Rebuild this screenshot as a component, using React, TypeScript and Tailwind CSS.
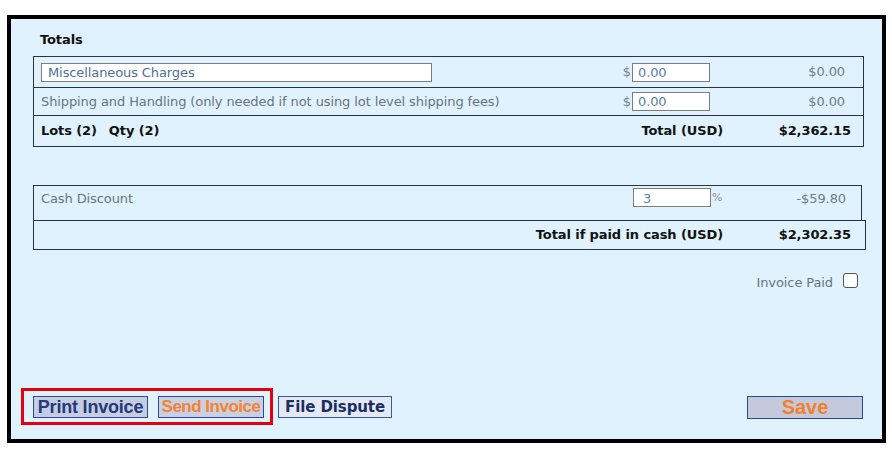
import React from "react";

const verdana = "font-['DejaVu_Sans',Verdana,sans-serif]";
const arial = "font-['Liberation_Sans',Arial,sans-serif]";

function AmountInput({ value }: { value: string }) {
  return (
    <div className="flex items-center">
      <span className="w-[9px] text-right text-[#7a8590]">$</span>
      <div className="ml-[1px] h-[19px] w-[78px] border border-[#7d7d7d] bg-white pl-[5px] leading-[17px] text-[#5b7fa8]">
        {value}
      </div>
    </div>
  );
}

export default function App() {
  return (
    <div className={`h-[449px] w-[892px] bg-white pl-[7px] pt-[15px] ${verdana} text-[13px] tracking-[-0.1px]`}>
      <div className="flex h-[428px] w-[879px] flex-col border-4 border-black bg-[#dff2fd]">
        <div className="ml-[29px] mt-[13px] text-[13px] font-bold leading-[15px] text-[#111]">Totals</div>

        {/* charges table */}
        <div className="ml-[22px] mt-[9px] w-[831px] border border-[#2a3440]">
          <div className="flex h-[31px] items-center border-b border-[#2a3440]">
            <div className="flex-1 pl-[7px]">
              <div className="h-[19px] w-[391px] border border-[#7d7d7d] bg-white pl-[6px] leading-[17px] text-[#4d6f96]">
                Miscellaneous Charges
              </div>
            </div>
            <div className="w-[104px]">
              <AmountInput value="0.00" />
            </div>
            <div className="w-[137px] pr-[18px] text-right text-[#737c85]">$0.00</div>
          </div>
          <div className="flex h-[28px] items-center border-b border-[#2a3440]">
            <div className="flex-1 pl-[7px] text-[#6b747c]">
              Shipping and Handling (only needed if not using lot level shipping fees)
            </div>
            <div className="w-[104px]">
              <AmountInput value="0.00" />
            </div>
            <div className="w-[137px] pr-[18px] text-right text-[#737c85]">$0.00</div>
          </div>
          <div className="flex h-[30px] items-center font-bold text-[#111]">
            <div className="flex-1 pl-[7px]">
              Lots (2)<span className="ml-[12px]">Qty (2)</span>
            </div>
            <div className="pr-[1px]">Total (USD)</div>
            <div className="w-[139px] pr-[12px] text-right">$2,362.15</div>
          </div>
        </div>

        {/* cash discount */}
        <div className="ml-[22px] mt-[38px] flex h-[35px] w-[829px] border border-b-0 border-[#2a3440]">
          <div className="flex-1 pl-[7px] pt-[3px] text-[#6b747c]">Cash Discount</div>
          <div className="flex w-[104px] items-start pt-[2px]">
            <div className="ml-[10px] h-[19px] w-[78px] border border-[#7d7d7d] bg-white pl-[9px] leading-[19px] text-[#5b7fa8]">
              3
            </div>
            <span className="ml-[1px] mt-[2px] text-[11px] text-[#8a9299]">%</span>
          </div>
          <div className="w-[134px] pr-[15px] pt-[3px] text-right text-[#737c85]">-$59.80</div>
        </div>
        <div className="ml-[22px] flex h-[30px] w-[833px] items-center border border-[#2a3440] font-bold text-[#111]">
          <div className="flex-1 pr-[3px] text-right">Total if paid in cash (USD)</div>
          <div className="w-[139px] pr-[14px] text-right">$2,302.35</div>
        </div>

        {/* invoice paid */}
        <div className="mr-[24px] mt-[19px] flex items-center justify-end gap-[10px] text-[#6b747c]">
          <span className="mt-[4px]">Invoice Paid</span>
          <span className="h-[15px] w-[15px] rounded-[3px] border border-[#555] bg-white" />
        </div>

        {/* action buttons */}
        <div className="mt-auto mb-[14px] flex items-end">
          <div className="ml-[10px] flex h-[37px] items-center gap-[10px] border-[3px] border-[#e3000f] pl-[9px] pr-[6px]">
            <button className={`h-[22px] w-[115px] border border-[#2d4b8c] bg-[#c5cde3] ${arial} text-[18px] font-bold leading-[20px] tracking-[-0.2px] text-[#243a7a]`}>
              Print Invoice
            </button>
            <button className={`h-[22px] w-[106px] border border-[#2d4b8c] bg-[#c9d0e4] ${arial} text-[17px] font-bold leading-[20px] tracking-[-0.5px] text-[#f5822f]`}>
              Send Invoice
            </button>
          </div>
          <button className="mb-[7px] ml-[5px] h-[22px] w-[114px] border border-[#3b5a9a] bg-[#e4e9f6] text-[15px] font-bold leading-[20px] text-[#1d2f5e]">
            File Dispute
          </button>
          <button className={`mb-[6px] ml-auto mr-[19px] h-[23px] w-[116px] border border-[#2d4b8c] bg-[#c4cadb] ${arial} text-[20px] font-bold leading-[21px] text-[#f47f2b]`}>
            Save
          </button>
        </div>
      </div>
    </div>
  );
}
